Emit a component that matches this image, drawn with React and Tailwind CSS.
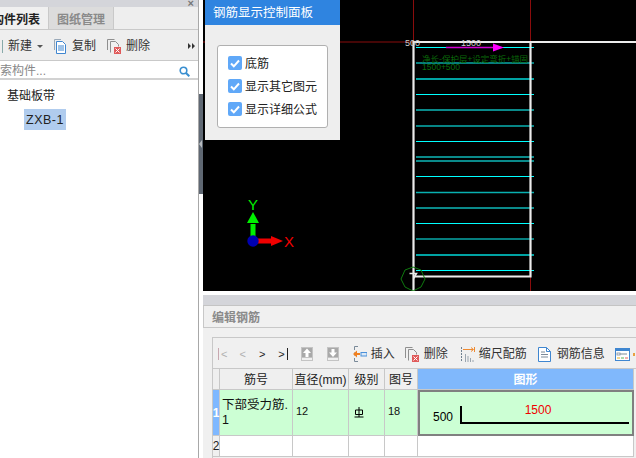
import React from "react";

const CopyIcon = () => (
  <svg width="14" height="15" viewBox="0 0 14 15" className="shrink-0">
    <path d="M1.5 11V.5H8" fill="none" stroke="#9aa9b8" />
    <path d="M3.5 2.5h6l3 3v9h-9z" fill="#fff" stroke="#3f86d0" />
    <path d="M5 7h6M5 9h6M5 11h6" stroke="#3f86d0" />
  </svg>
);
const DeleteIcon = () => (
  <svg width="15" height="15" viewBox="0 0 15 15" className="shrink-0">
    <path d="M.5 11V.5H7.5" fill="none" stroke="#8f8f8f" />
    <path d="M3.5 13.5v-11h5l3 3v2" fill="#f0f0f0" stroke="#8f8f8f" />
    <rect x="7" y="8" width="7" height="7" fill="#e05a5a" />
    <path d="M8.5 9.5l4 4M12.5 9.5l-4 4" stroke="#fff" />
  </svg>
);
const SearchIcon = () => (
  <svg width="11" height="11" viewBox="0 0 11 11" className="shrink-0">
    <circle cx="4.5" cy="4.5" r="3.3" fill="none" stroke="#3a8fd0" strokeWidth="1.6" />
    <path d="M7 7l3.3 3.3" stroke="#3a8fd0" strokeWidth="2" />
  </svg>
);
const CheckBox = () => (
  <span className="w-[14px] h-[14px] rounded-[2px] bg-[#60a8f8] flex items-center justify-center shrink-0">
    <svg width="10" height="9" viewBox="0 0 10 9">
      <path d="M1 4.5l2.8 2.8L9 1.5" fill="none" stroke="#fff" strokeWidth="2" />
    </svg>
  </span>
);
const ArrowBox = ({ down }) => (
  <svg width="12" height="14" viewBox="0 0 12 14" className="shrink-0">
    <rect width="12" height="14" fill="#c4c4c4" />
    <rect x="1" y="1" width="10" height="9" fill="#a9a9a9" />
    <rect x="1" y="11" width="10" height="2" fill="#f0f0f0" />
    <path
      d={down ? "M6 10L2 5.5h2.5V2h3v3.5H10z" : "M6 1.5l4 4.5H7.5v4h-3V6H2z"}
      fill="#fff"
    />
  </svg>
);
const InsertIcon = () => (
  <svg width="14" height="16" viewBox="0 0 14 16" className="shrink-0">
    <path d="M5 .5H1.500V4M1.500 12V15.500H5M1.500 6.500V9.500" fill="none" stroke="#7a8a99" />
    <path d="M0 8l4-3.500V7h3v2H4v2.500z" fill="#f08020" />
    <rect x="8" y="6.500" width="6" height="3.500" fill="#dbe9f7" stroke="#4a90d9" strokeWidth="1" />
  </svg>
);
const ScaleIcon = () => (
  <svg width="14" height="15" viewBox="0 0 14 15" className="shrink-0">
    <path d="M.5 0v15" stroke="#6f8090" strokeDasharray="2 1" />
    <path d="M2 2.500h10" stroke="#ef8a30" />
    <path d="M13.500 0v5M10 .5l2.500 2-2.500 2" fill="none" stroke="#ef8a30" />
    <path d="M4.500 7v8M7 9v6M9.500 11v4M12 13v2" stroke="#9aa5af" />
  </svg>
);
const DocIcon = () => (
  <svg width="13" height="15" viewBox="0 0 13 15" className="shrink-0">
    <path d="M.5.5h8l4 4v10H.500z" fill="#fff" stroke="#3f86d0" />
    <path d="M8.500.5v4h4" fill="none" stroke="#3f86d0" />
    <path d="M3 5h4M3 7.500h7M3 10h7" stroke="#7d8b99" />
  </svg>
);
const WindowIcon = () => (
  <svg width="15" height="13" viewBox="0 0 15 13" className="shrink-0">
    <rect x=".5" y=".5" width="14" height="12" fill="#fff" stroke="#3f86d0" />
    <rect width="15" height="3" fill="#3f86d0" />
    <rect x="2" y="5" width="3" height="2" fill="none" stroke="#7d8b99" strokeWidth=".8" />
    <path d="M5 6h7" stroke="#7d8b99" />
    <path d="M2 10h3" stroke="#e8b020" />
    <path d="M6 10h3" stroke="#5bb35b" />
    <path d="M10 10h3" stroke="#e86060" />
  </svg>
);
const Grade = () => (
  <svg width="10" height="11" viewBox="0 0 10 11">
    <path d="M1.500 3h7v4.500h-7zM5 0v10M0.500 10h9" fill="none" stroke="#000" />
  </svg>
);

const rebarY = [
  [47.5, "#00ffff", 1],
  [63, "#08a8a8", 1.6],
  [79, "#00d8d8", 1.4],
  [94.5, "#00ffff", 1],
  [110, "#0a8a8a", 2],
  [126, "#08b0b0", 1.5],
  [141.5, "#00ffff", 1],
  [157, "#0a8a8a", 2],
  [161, "#0a8a8a", 2],
  [176.5, "#00ffff", 1],
  [192.500, "#08b0b0", 1.5],
  [208, "#0a8a8a", 2],
  [223.500, "#00ffff", 1],
  [239, "#08a8a8", 1.6],
  [255, "#00d8d8", 1.4],
  [270.500, "#00ffff", 1],
];

const CanvasDrawing = () => (
  <svg width="433" height="291" viewBox="203 0 433 291" className="block">
    <path d="M203 42h211M413.500 0v42M530.500 0v42M530.500 277v14" stroke="#8a0c0c" strokeWidth="1" fill="none" />
    {rebarY.map(([y, c, w]) => (
      <path key={y} d={`M416 ${y}H534`} stroke={c} strokeWidth={w} />
    ))}
    <path d="M413.500 291V42H636" fill="none" stroke="#ececec" strokeWidth="2.200" />
    <path d="M530.500 42V276.500H414" fill="none" stroke="#ececec" strokeWidth="2.200" />
    <path d="M446 47.500H495" stroke="#d000d0" strokeWidth="1.500" />
    <path d="M493 43.500L504 47.500L493 51.500z" fill="#ff00ff" />
    <text x="405" y="46" fontSize="9" fill="#cfcfcf" fontFamily="Liberation Sans">500</text>
    <text x="461" y="46" fontSize="9" fill="#cfcfcf" fontFamily="Liberation Sans">1500</text>
    <text x="422" y="62" fontSize="8.500" fill="#0a6a0a" fontFamily="Noto Sans CJK SC">净长-保护层+设定弯折+锚固</text>
    <text x="422" y="70" fontSize="8.500" fill="#0a6a0a" fontFamily="Liberation Sans">1500+500</text>
    <polygon
      points="413,267 421,270 425,279 421,287 413,291 405,287 401,279 405,270"
      fill="none"
      stroke="#0f7a0f"
    />
    <path d="M409.500 273.500h7l-3 5" fill="none" stroke="#e8e8e8" strokeWidth="1.500" />
    <path d="M253 224v17" stroke="#00f000" strokeWidth="5" />
    <path d="M253 212l6 11h-12z" fill="#00f000" />
    <path d="M253 241h19" stroke="#f00000" strokeWidth="5" />
    <path d="M283 241l-12 5v-10z" fill="#f00000" />
    <circle cx="253" cy="241" r="5.700" fill="#0000b0" />
    <text x="248" y="210" fontSize="15" fill="#00f000" fontFamily="Liberation Sans">Y</text>
    <text x="284" y="247" fontSize="15" fill="#f00000" fontFamily="Liberation Sans">X</text>
  </svg>
);

const H = ({ children, className = "" }) => (
  <div className={`border-r border-b border-[#c8c8c8] flex items-center justify-center pt-[1px] text-[12px] text-[#222] ${className}`}>
    {children}
  </div>
);

export default function App() {
  return (
    <div className="w-[636px] h-[458px] overflow-hidden flex bg-white text-black font-['Liberation_Sans','Noto_Sans_CJK_SC',sans-serif] leading-none">
      {/* left panel */}
      <div className="w-[198px] shrink-0 flex flex-col bg-white">
        <div className="h-[7px] bg-[#d4d5da] flex justify-end pr-[4px] overflow-hidden">
          <span className="text-[11px] leading-[6px] text-[#777] font-bold">×</span>
        </div>
        <div className="h-[23px] flex bg-[#eeeeee] border-b border-[#c9c9c9]">
          <div className="w-[48px] overflow-hidden bg-[#f0f0f0] flex items-center justify-end pr-[8px] pt-[3px] whitespace-nowrap shrink-0">
            <span className="text-[12px] font-bold text-[#222] shrink-0">构件列表</span>
          </div>
          <div className="w-[66px] bg-[#dcdcdc] border-x border-[#c9c9c9] flex items-center justify-center pt-[3px]">
            <span className="text-[12px] font-bold text-[#8a8a8a]">图纸管理</span>
          </div>
        </div>
        <div className="h-[31px] bg-[#eeeeee] border-b border-[#c9c9c9] flex items-center pt-[2px] text-[12px] text-[#333]">
          <span className="w-[3px] h-[13px] border-r border-[#8aa] mr-[5px]" />
          <span>新建</span>
          <span className="ml-[5px] w-0 h-0 border-x-[3px] border-x-transparent border-t-[3px] border-t-[#555]" />
          <span className="ml-[10px]"><CopyIcon /></span>
          <span className="ml-[5px]">复制</span>
          <span className="ml-[11px]"><DeleteIcon /></span>
          <span className="ml-[4px]">删除</span>
          <span className="ml-auto mr-[3px] flex">
            <svg width="7" height="6" viewBox="0 0 7 6"><path d="M0 0l3 3-3 3zM4 0l3 3-3 3z" fill="#333" /></svg>
          </span>
        </div>
        <div className="h-[19px] bg-white border-b-2 border-[#d2d2d2] flex items-center justify-between pr-[8px] pt-[3px] overflow-hidden">
          <span className="text-[12px] text-[#888] whitespace-nowrap">索构件...</span>
          <SearchIcon />
        </div>
        <div className="pt-[9px] pl-[7px] flex flex-col items-start">
          <div className="text-[12px] leading-[14px] text-[#222] h-[19px]">基础板带</div>
          <div className="ml-[17px] mt-[1px] w-[42px] h-[21px] bg-[#b0ccee] flex items-center justify-center pt-[1px] text-[12.500px] tracking-[0.5px] text-[#222]">
            ZXB-1
          </div>
        </div>
      </div>

      {/* splitter */}
      <div className="w-[5px] shrink-0 flex flex-col border-l border-[#a8a8a8] bg-white">
        <div className="h-[94px]" />
        <div className="h-[100px] bg-[#5f6873] flex items-center">
          <span className="w-0 h-0 border-y-[4px] border-y-transparent border-r-[3px] border-r-[#b8bcc0]" />
        </div>
      </div>

      {/* right column */}
      <div className="w-[433px] shrink-0 flex flex-col bg-[#f0f0f0]">
        <div className="h-[291px] bg-black relative shrink-0">
          <CanvasDrawing />
          <div className="absolute left-[2px] top-0 w-[135px] h-[140px] bg-[#eeeeee] flex flex-col">
            <div className="h-[25px] bg-[#2f84e0] text-white text-[12.500px] flex items-center pl-[8px] pt-[1px]">钢筋显示控制面板</div>
            <div className="mt-[20px] mx-[12px] h-[83px] bg-white border border-[#b0b0b0] rounded-[3px] flex flex-col gap-[9px] pl-[10px] pt-[10px]">
              {["底筋", "显示其它图元", "显示详细公式"].map((t) => (
                <div key={t} className="flex items-center gap-[3px] h-[14px] text-[12px] text-[#222]">
                  <CheckBox />
                  <span className="pt-[1px]">{t}</span>
                </div>
              ))}
            </div>
          </div>
        </div>
        <div className="h-[4px] bg-white shrink-0" />
        <div className="h-[11px] bg-[#d4d5da] shrink-0 border-b border-[#c4c4c4]" />
        <div className="h-[22px] bg-[#f0f0f0] border-b border-l border-[#c8c8c8] flex items-center pl-[8px] pt-[3px] shrink-0 text-[12px] font-bold text-[#8a8a8a]">
          编辑钢筋
        </div>
        <div className="h-[9px] shrink-0" />
        <div className="ml-[9px] flex-1 border-l border-t border-[#c8c8c8] min-h-0 overflow-hidden">
          {/* toolbar */}
          <div className="h-[30px] flex items-center pt-[2px] text-[12px] text-[#333] whitespace-nowrap overflow-hidden">
            <span className="ml-[5px] flex items-center gap-[2px] text-[#b0b0b0] text-[11px]"><span className="w-px h-[12px] bg-[#c8a8b0]" />&lt;</span>
            <span className="ml-[12px] text-[#b0b0b0] text-[11px]">&lt;</span>
            <span className="ml-[13px] text-[11px] text-[#222]">&gt;</span>
            <span className="ml-[13px] flex items-center gap-[2px] text-[11px] text-[#222]">&gt;<span className="w-px h-[12px] bg-[#222]" /></span>
            <span className="ml-[13px]"><ArrowBox /></span>
            <span className="ml-[14px]"><ArrowBox down /></span>
            <span className="ml-[14px]"><InsertIcon /></span>
            <span className="ml-[4px]">插入</span>
            <span className="ml-[10px]"><DeleteIcon /></span>
            <span className="ml-[4px]">删除</span>
            <span className="ml-[13px]"><ScaleIcon /></span>
            <span className="ml-[4px]">缩尺配筋</span>
            <span className="ml-[11px]"><DocIcon /></span>
            <span className="ml-[6px]">钢筋信息</span>
            <span className="ml-[10px]"><WindowIcon /></span>
            <span className="ml-[3px] w-[2px] h-[3px] bg-[#e8a040] shrink-0" />
          </div>
          {/* table */}
          <div className="grid grid-cols-[7px_73px_56px_36px_33px_216px] grid-rows-[21px_46px_21px] border-t border-[#c8c8c8]">
            <H className="bg-[#efefef]" />
            <H className="bg-[#efefef]">筋号</H>
            <H className="bg-[#efefef]">直径(mm)</H>
            <H className="bg-[#efefef]">级别</H>
            <H className="bg-[#efefef]">图号</H>
            <H className="bg-[#80b8fc] !text-white font-bold border-[#6aa5ee]">图形</H>

            <div className="bg-[#7fb8ff] border-r border-b border-[#c8c8c8] flex items-center justify-center text-white text-[12px] font-bold">1</div>
            <div className="bg-[#ccffd4] border-r border-b border-[#c8c8c8] pl-[2px] flex flex-col justify-center text-[12.500px] leading-[15px] text-[#111]">
              <span className="whitespace-nowrap">下部受力筋.</span>
              <span>1</span>
            </div>
            <div className="bg-[#ccffd4] border-r border-b border-[#c8c8c8] pl-[3px] pb-[2px] flex items-center text-[11px] text-[#111]">12</div>
            <div className="bg-[#ccffd4] border-r border-b border-[#c8c8c8] pl-[5px] flex items-center"><Grade /></div>
            <div className="bg-[#ccffd4] border-r border-b border-[#c8c8c8] pl-[3px] pb-[2px] flex items-center text-[11px] text-[#111]">18</div>
            <div className="bg-[#ccffd4] border-2 border-[#808080]">
              <svg width="212" height="42" viewBox="0 0 212 42" className="block">
                <text x="13" y="29" fontSize="12" fill="#000" fontFamily="Liberation Sans">500</text>
                <path d="M41 14v17h168" fill="none" stroke="#000" strokeWidth="2" />
                <text x="118" y="22" textAnchor="middle" fontSize="12" fill="#f00000" fontFamily="Liberation Sans">1500</text>
              </svg>
            </div>

            <div className="bg-[#f0f0f0] border-r border-b border-[#c8c8c8] flex items-center justify-center text-[12px] text-[#222]">2</div>
            <div className="bg-white border-r border-b border-[#c8c8c8]" />
            <div className="bg-white border-r border-b border-[#c8c8c8]" />
            <div className="bg-white border-r border-b border-[#c8c8c8]" />
            <div className="bg-white border-r border-b border-[#c8c8c8]" />
            <div className="bg-white border-r border-b border-[#c8c8c8]" />
          </div>
        </div>
      </div>
    </div>
  );
}
